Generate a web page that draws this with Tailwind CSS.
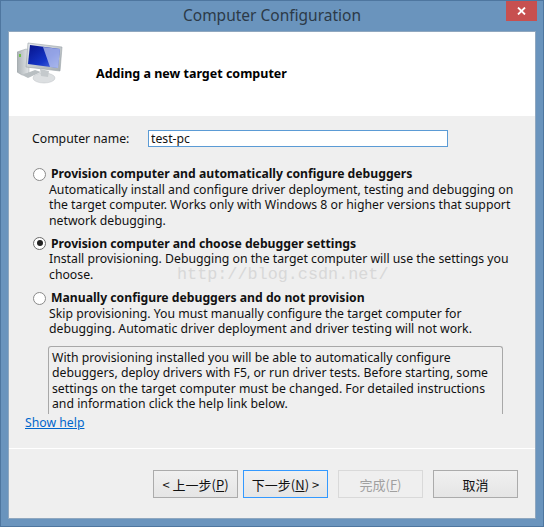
<!DOCTYPE html>
<html lang="en">
<head>
  <meta charset="UTF-8">
  <title>Computer Configuration</title>
  <script src="https://cdn.jsdelivr.net/npm/@tailwindcss/browser@4"></script>
</head>
<body class="m-0 overflow-hidden bg-[#6a94bd]">
  <div class="relative w-[544px] h-[527px] flex flex-col border border-[#4e769f] bg-[#6a94bd] text-[12.25px] leading-[15.4px] text-[#111] whitespace-nowrap font-['Noto_Sans','Open_Sans',sans-serif]">

    <!-- title bar -->
    <div class="relative h-[30px] shrink-0 flex items-center justify-center text-[15.5px] text-[#2c3a48]">
      Computer Configuration
      <div class="absolute right-[6px] top-0 w-[31px] h-[20px] bg-[#c75050] flex items-center justify-center">
        <svg width="9" height="8" viewBox="0 0 9 8"><path d="M1 0.5 L8 7.5 M8 0.5 L1 7.5" stroke="#fff" stroke-width="1.8" /></svg>
      </div>
    </div>

    <!-- client area -->
    <div class="mx-[7px] h-[488px] flex flex-col bg-[#efefef] border border-[#4e769f]/60">
      <div class="h-[84px] shrink-0 bg-white flex">
        <svg class="ml-[8px] mt-[10px]" width="50" height="44" viewBox="0 0 50 44">
          <defs>
            <linearGradient id="scr" x1="0" y1="0" x2="1" y2="1"><stop offset="0" stop-color="#06128a"/><stop offset="0.6" stop-color="#1536c8"/><stop offset="1" stop-color="#5f7be0"/></linearGradient>
            <linearGradient id="frm" x1="0" y1="0" x2="1" y2="1"><stop offset="0" stop-color="#e8ebee"/><stop offset="1" stop-color="#a3abaf"/></linearGradient>
            <linearGradient id="twr" x1="0" y1="0" x2="1" y2="0"><stop offset="0" stop-color="#aab1b5"/><stop offset="1" stop-color="#e2e5e7"/></linearGradient>
          </defs>
          <path d="M0 10 L9 7 L12 8 L12 31 L5 33 L0 30 Z" fill="url(#twr)" stroke="#9aa2a6" stroke-width="0.5"/>
          <rect x="2" y="12" width="2" height="3" fill="#6fc04a"/>
          <path d="M5 33 L18 28 L24 30 L11 36 Z" fill="#b9bfc2"/>
          <ellipse cx="27" cy="36" rx="11" ry="5" fill="#dcdfe1" stroke="#bcc1c4" stroke-width="0.5"/>
          <path d="M23 27 L32 29 L31 35 L24 34 Z" fill="#c4c9cc"/>
          <path d="M11 1 L45 5 L43 29 L9 25 Z" fill="url(#frm)" stroke="#9aa3a8" stroke-width="0.6"/>
          <path d="M13 3 L43 7 L41 26 L11 22 Z" fill="url(#scr)"/>
          <path d="M26 5 L43 7 L42 17 L41 26 L33 25 Z" fill="#c9d2f2" opacity="0.7"/>
        </svg>
        <div class="ml-[29px] mt-[34px] font-bold text-[12.5px] text-black h-[16px]">Adding a new target computer</div>
      </div>

      <div class="flex-1 flex flex-col">
        <div class="pl-[23px] pt-[14px] flex items-center h-[31px]">
          <label class="w-[116px]">Computer name:</label>
          <input type="text" value="test-pc" class="w-[300px] h-[17px] bg-white border border-[#5b9bd5] px-[2px] text-[12.25px] outline-none">
        </div>

        <div class="pl-[23px] pr-[20px] mt-[19px]">
          <div class="flex items-center h-[16px]">
            <span class="w-[13px] h-[13px] rounded-full border border-[#8a8a8a] bg-white mr-[5px] ml-[1px]"></span>
            <span class="font-bold text-[12.2px]">Provision computer and automatically configure debuggers</span>
          </div>
          <p class="ml-[17px]">Automatically install and configure driver deployment, testing and debugging on<br>the target computer. Works only with Windows 8 or higher versions that support<br>network debugging.</p>
        </div>

        <div class="pl-[23px] pr-[20px] mt-[7px]">
          <div class="flex items-center h-[16px]">
            <span class="w-[13px] h-[13px] rounded-full border border-[#6a6a6a] bg-white mr-[5px] ml-[1px] flex items-center justify-center"><span class="w-[6px] h-[6px] rounded-full bg-[#222]"></span></span>
            <span class="font-bold text-[12.2px]">Provision computer and choose debugger settings</span>
          </div>
          <p class="ml-[17px]">Install provisioning. Debugging on the target computer will use the settings you<br>choose.</p>
        </div>

        <div class="pl-[23px] pr-[20px] mt-[8px]">
          <div class="flex items-center h-[16px]">
            <span class="w-[13px] h-[13px] rounded-full border border-[#8a8a8a] bg-white mr-[5px] ml-[1px]"></span>
            <span class="font-bold text-[12.2px]">Manually configure debuggers and do not provision</span>
          </div>
          <p class="ml-[17px]">Skip provisioning. You must manually configure the target computer for<br>debugging. Automatic driver deployment and driver testing will not work.</p>
        </div>

        <div class="ml-[39px] mt-[9px] w-[455px] h-[68px] shrink-0 border border-b-0 border-[#a8a8a8] rounded-t-[3px] px-[3px] pt-[3px]">
          With provisioning installed you will be able to automatically configure<br>debuggers, deploy drivers with F5, or run driver tests. Before starting, some<br>settings on the target computer must be changed. For detailed instructions<br>and information click the help link below.
        </div>

        <a class="ml-[16px] mt-[1px] self-start underline text-[#0066cc]">Show help</a>

        <div class="mt-[18px] h-[1px] bg-white shrink-0"></div>

        <div class="mt-[21px] pl-[144px] flex">
          <button class="w-[85px] h-[28px] border border-[#ababab] bg-gradient-to-b from-[#f0f0f0] to-[#e5e5e5] text-[13px] font-['Noto_Sans_CJK_SC',sans-serif]">&lt; 上一步(<u>P</u>)</button>
          <button class="ml-[5px] w-[85px] h-[28px] border border-[#3399ff] bg-gradient-to-b from-[#f0f0f0] to-[#e5e5e5] text-[13px] font-['Noto_Sans_CJK_SC',sans-serif]">下一步(<u>N</u>) &gt;</button>
          <button class="ml-[10px] w-[85px] h-[28px] border border-[#d9d9d9] bg-[#efefef] text-[13px] text-[#a0a0a0] font-['Noto_Sans_CJK_SC',sans-serif]">完成(<u>F</u>)</button>
          <button class="ml-[10px] w-[85px] h-[28px] border border-[#ababab] bg-gradient-to-b from-[#f0f0f0] to-[#e5e5e5] text-[13px] font-['Noto_Sans_CJK_SC',sans-serif]">取消</button>
        </div>
      </div>
    </div>

    <!-- blog watermark over the page -->
    <div class="absolute left-[176px] top-[265px] text-[16.8px] leading-[18px] text-[#d8d8d8] font-['Liberation_Mono',monospace] whitespace-nowrap">http://blog.csdn.net/</div>
  </div>
</body>
</html>
